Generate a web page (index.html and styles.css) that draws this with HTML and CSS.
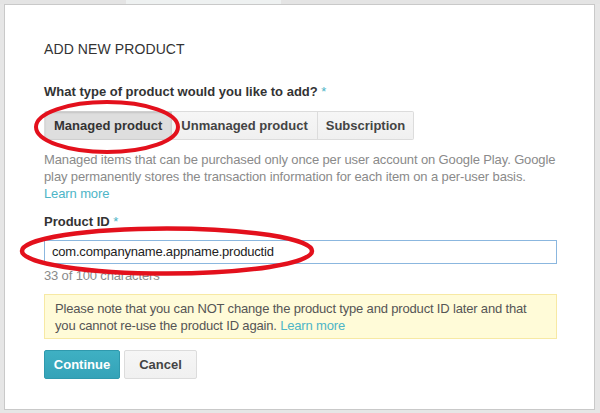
FILE: index.html
```html
<!DOCTYPE html>
<html>
<head>
<meta charset="utf-8">
<link rel="stylesheet" href="styles.css">
</head>
<body>
<div class="topbar"><span class="topbar-tab"></span></div>
<div class="dialog">
  <h1 class="title">ADD NEW PRODUCT</h1>
  <div class="label label-q">What type of product would you like to add? <span class="req">*</span></div>
  <div class="seg">
    <button class="seg-btn seg-active">Managed product</button>
    <button class="seg-btn">Unmanaged product</button>
    <button class="seg-btn">Subscription</button>
  </div>
  <p class="help">Managed items that can be purchased only once per user account on Google Play. Google play permanently stores the transaction information for each item on a per-user basis. <a class="link" href="#">Learn more</a></p>
  <div class="label label-id">Product ID <span class="req">*</span></div>
  <div class="input">com.companyname.appname.productid</div>
  <div class="count">33 of 100 characters</div>
  <div class="note">Please note that you can NOT change the product type and product ID later and that you cannot re-use the product ID again. <a class="link" href="#">Learn more</a></div>
  <div class="actions">
    <button class="btn btn-primary">Continue</button>
    <button class="btn btn-default">Cancel</button>
  </div>
</div>
<svg class="marks" width="600" height="413" viewBox="0 0 600 413">
  <ellipse cx="107" cy="127" rx="71" ry="25" fill="none" stroke="#e3101c" stroke-width="4"/>
  <ellipse cx="167" cy="251" rx="145" ry="22.5" fill="none" stroke="#e3101c" stroke-width="4.5"/>
</svg>
</body>
</html>
```
FILE: styles.css
```css
html, body {
  margin: 0;
  padding: 0;
}
body {
  width: 600px;
  height: 413px;
  background: #e6e6e6;
  font-family: "Liberation Sans", Arial, sans-serif;
  color: #333;
  position: relative;
  overflow: hidden;
}
.topbar {
  height: 4px;
  background: #e4e4e4;
  display: flex;
}
.topbar-tab {
  margin-left: 126px;
  width: 155px;
  background: #eef1f1;
}
.dialog {
  margin-left: 4px;
  width: 591px;
  height: 406px;
  background: #fff;
  border: 1px solid #c9c9c9;
  box-sizing: border-box;
  padding: 34px 38px 0 39px;
  display: flex;
  flex-direction: column;
  align-items: flex-start;
}
.title {
  margin: 0;
  font-size: 14px;
  font-weight: normal;
  line-height: 20px;
  color: #333;
  letter-spacing: 0.1px;
}
.label {
  font-size: 13px;
  line-height: 17px;
  font-weight: bold;
  color: #333;
}
.label-q {
  margin-top: 24px;
}
.req {
  color: #4bb4c6;
  font-weight: normal;
}
.seg {
  margin-top: 11px;
  display: flex;
}
.seg-btn {
  font-family: inherit;
  font-size: 13px;
  font-weight: bold;
  color: #444;
  height: 29px;
  padding: 0 9px;
  margin: 0;
  border: 1px solid #dcdcdc;
  border-left: none;
  background: linear-gradient(#f6f6f6, #f0f0f0);
}
.seg-btn:first-child {
  border-left: 1px solid #dcdcdc;
  border-radius: 2px 0 0 2px;
}
.seg-btn:last-child {
  border-radius: 0 2px 2px 0;
  padding: 0 8px;
}
.seg-active {
  background: #dedede;
  box-shadow: inset 0 1px 2px rgba(0,0,0,0.12);
  color: #333;
  border-color: #cfcfcf;
}
.help {
  margin: 11px 0 0;
  font-size: 13px;
  line-height: 17px;
  letter-spacing: -0.12px;
  color: #8a8a8a;
  width: 513px;
}
.link {
  color: #4db5c7;
  text-decoration: none;
}
.label-id {
  margin-top: 11px;
}
.input {
  margin-top: 10px;
  width: 513px;
  height: 24px;
  box-sizing: border-box;
  border: 1px solid #8bb7df;
  padding: 0 7px;
  font-size: 13px;
  line-height: 22px;
  letter-spacing: -0.2px;
  color: #222;
}
.count {
  margin-top: 3px;
  font-size: 13px;
  line-height: 17px;
  letter-spacing: -0.15px;
  color: #8a8a8a;
}
.note {
  margin-top: 10px;
  width: 513px;
  box-sizing: border-box;
  background: #fffbd8;
  border: 1px solid #f7e9a4;
  padding: 5px 10px 4px;
  font-size: 13px;
  line-height: 17px;
  letter-spacing: -0.17px;
  color: #555;
}
.actions {
  margin-top: 11px;
  display: flex;
  gap: 4px;
}
.btn {
  font-family: inherit;
  font-size: 13px;
  font-weight: bold;
  height: 29px;
  margin: 0;
  border-radius: 2px;
}
.btn-primary {
  width: 76px;
  color: #fff;
  background: linear-gradient(#3fb0c3, #34a3b8);
  border: 1px solid #2f99ad;
}
.btn-default {
  width: 73px;
  color: #444;
  background: linear-gradient(#f6f6f6, #f0f0f0);
  border: 1px solid #dcdcdc;
}
.marks {
  position: absolute;
  top: 0;
  left: 0;
  pointer-events: none;
}
```
